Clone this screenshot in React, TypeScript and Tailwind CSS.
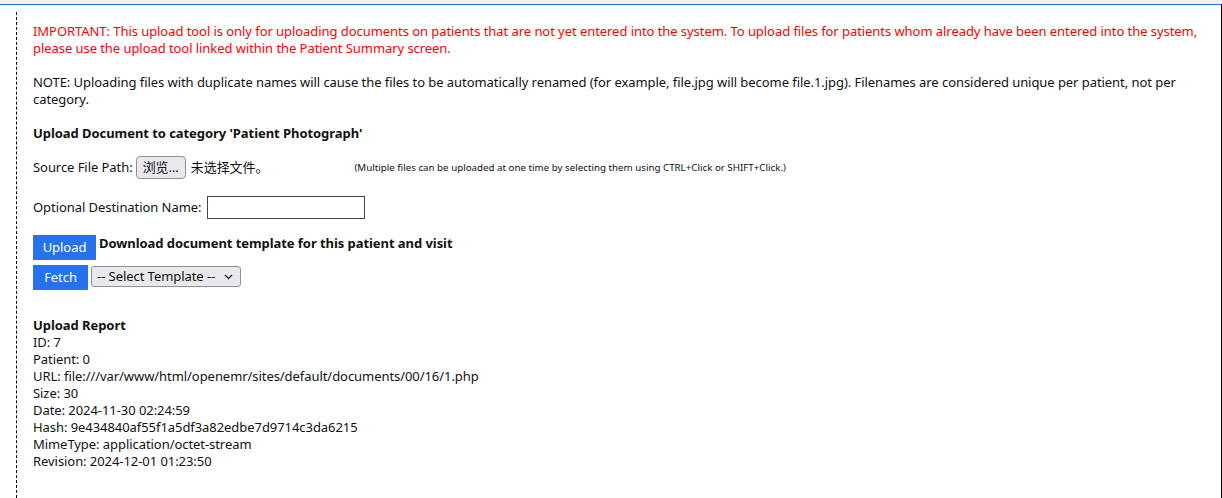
export default function App() {
  const report = [
    "ID: 7",
    "Patient: 0",
    "URL: file:///var/www/html/openemr/sites/default/documents/00/16/1.php",
    "Size: 30",
    "Date: 2024-11-30 02:24:59",
    "Hash: 9e434840af55f1a5df3a82edbe7d9714c3da6215",
    "MimeType: application/octet-stream",
    "Revision: 2024-12-01 01:23:50",
  ];

  return (
    <div className="h-[498px] overflow-hidden bg-white font-['Noto_Sans','Noto_Sans_CJK_SC',sans-serif] text-[13px] leading-[17px] tracking-[-0.06px] text-[#111]">
      {/* top strip */}
      <div className="h-[4px] bg-[#f0f0f0]" />
      <div className="h-[494px] border-t border-r border-t-[#1a73e8] border-r-black pl-[16px] pt-[7px]">
        <div className="h-full border-l border-dashed border-black pl-[16px] pt-[11px]">
          <p className="text-[#ff0000]">
            IMPORTANT: This upload tool is only for uploading documents on patients that are not yet entered into the system. To upload files for patients whom already have been entered into the system, please use the upload tool linked within the Patient Summary screen.
          </p>
          <p className="mt-[17px]">
            NOTE: Uploading files with duplicate names will cause the files to be automatically renamed (for example, file.jpg will become file.1.jpg). Filenames are considered unique per patient, not per category.
          </p>
          <p className="mt-[17px] font-bold">Upload Document to category 'Patient Photograph'</p>

          <div className="mt-[14px] flex h-[23px] items-center">
            <span>Source File Path:</span>
            <button
              type="button"
              className="ml-[3px] h-[23px] rounded-[4px] border border-[#8f8f9d] bg-[#e9e9ed] px-[6px] text-[13px]"
            >
              浏览...
            </button>
            <span className="ml-[5px]">未选择文件。</span>
            <span className="ml-[86px] text-[9.75px] tracking-normal">
              (Multiple files can be uploaded at one time by selecting them using CTRL+Click or SHIFT+Click.)
            </span>
          </div>

          <div className="mt-[17px] flex h-[23px] items-center">
            <span>Optional Destination Name:</span>
            <input type="text" className="ml-[6px] h-[23px] w-[158px] border border-[#444] bg-white" />
          </div>

          <div className="mt-[16px] flex items-start">
            <button type="button" className="h-[25px] w-[63px] bg-[#2672ec] text-white">
              Upload
            </button>
            <span className="ml-[3px] font-bold">Download document template for this patient and visit</span>
          </div>
          <div className="mt-[5px] flex items-start">
            <button type="button" className="h-[25px] w-[55px] bg-[#2672ec] text-white">
              Fetch
            </button>
            <div className="ml-[3px] mt-[1px] flex h-[21px] w-[150px] items-center justify-between rounded-[3px] border border-[#8f8f9d] bg-[#e9e9ed] pl-[5px] pr-[7px]">
              <span>-- Select Template --</span>
              <svg width="9" height="6" viewBox="0 0 9 6" fill="none">
                <path d="M1 1l3.5 3.5L8 1" stroke="#222" strokeWidth="1.3" />
              </svg>
            </div>
          </div>

          <div className="mt-[27px]">
            <p className="font-bold">Upload Report</p>
            {report.map((line) => (
              <p key={line}>{line}</p>
            ))}
          </div>
        </div>
      </div>
    </div>
  );
}
